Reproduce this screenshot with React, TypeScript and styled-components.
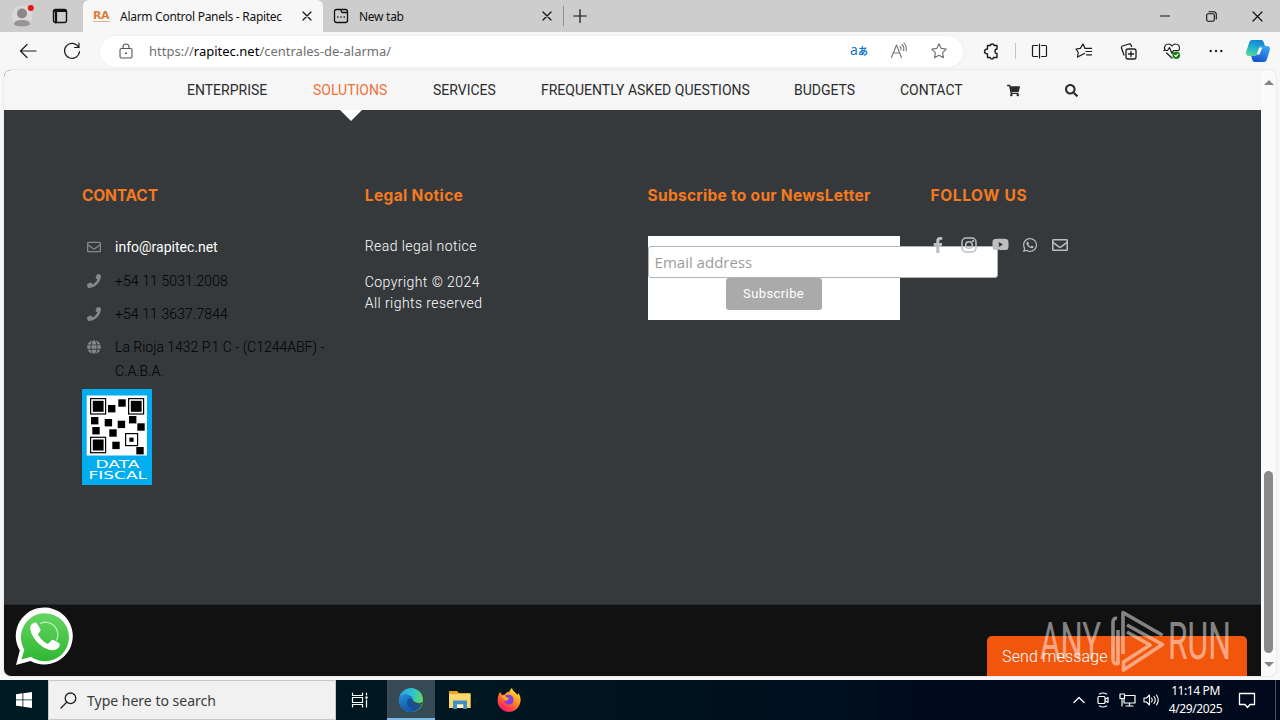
import { ReactNode } from 'react';
import styled, { createGlobalStyle, css } from 'styled-components';
import {
  FaFacebookF,
  FaGlobe,
  FaPhone,
  FaRegEnvelope,
  FaSearch,
  FaShoppingCart,
  FaWhatsapp,
  FaYoutube,
} from 'react-icons/fa';

const fonts = {
  system: '"Noto Sans", "Open Sans", sans-serif',
  body: 'Roboto, "Liberation Sans", sans-serif',
  heading: 'Inter, "Open Sans", sans-serif',
};

const colors = {
  strip: '#cdcdcd',
  chrome: '#f7f7f7',
  footer: '#36393b',
  bottom: '#111111',
  orange: '#f5791f',
  chat: '#f2560d',
  icon: '#1b1b1b',
};

const GlobalStyle = createGlobalStyle`
  * {
    box-sizing: border-box;
  }
  body {
    margin: 0;
    overflow: hidden;
  }
  svg {
    display: block;
    flex: none;
  }
`;

const Desktop = styled.div`
  position: relative;
  display: flex;
  flex-direction: column;
  width: 1280px;
  height: 720px;
  overflow: hidden;
  background: ${colors.chrome};
  font-family: ${fonts.system};
  white-space: nowrap;
`;

const Slot = styled.div<{ $w: number }>`
  display: flex;
  flex: none;
  align-items: center;
  justify-content: center;
  width: ${({ $w }) => $w}px;
  height: 100%;
`;

const Spacer = styled.div`
  flex: 1;
`;

/* ---------- browser ---------- */

const TabStrip = styled.div`
  display: flex;
  flex: none;
  height: 32px;
  background: ${colors.strip};
  color: #111;
`;

const Tab = styled.div<{ $active?: boolean }>`
  display: flex;
  align-items: center;
  gap: 10px;
  width: 240px;
  padding: 0 11px 0 10px;
  ${({ $active }) =>
    $active &&
    css`
      background: ${colors.chrome};
      border-radius: 6px 6px 0 0;
    `}
`;

const TabTitle = styled.div`
  flex: 1;
  font-size: 12px;
  letter-spacing: -0.28px;
  color: #111;
`;

const Favicon = styled.div`
  width: 17px;
  border-bottom: 1px solid #d9b596;
  font: bold 11px/10px 'DejaVu Sans', sans-serif;
  letter-spacing: -0.4px;
  color: #e07b35;
`;

const Divider = styled.div<{ $h: number; $color?: string }>`
  flex: none;
  width: 1px;
  height: ${({ $h }) => $h}px;
  align-self: center;
  background: ${({ $color = '#8f8f8f' }) => $color};
`;

const Toolbar = styled.div`
  display: flex;
  flex: none;
  align-items: center;
  height: 38px;
  padding-left: 6px;
  color: ${colors.icon};
`;

const AddressBar = styled.div`
  display: flex;
  align-items: center;
  width: 863px;
  height: 31px;
  margin-left: 6px;
  border-radius: 16px;
  background: #fff;
  box-shadow: 0 0 2px #e2e2e2;
`;

const Url = styled.div`
  margin-left: 4px;
  font-size: 13px;
  color: #707070;

  b {
    font-weight: 400;
    color: #000;
  }
`;

const Translate = styled.div`
  margin-top: -3px;
  font: 14px 'Noto Sans', 'Noto Sans CJK JP', sans-serif;
  color: #1377c9;

  small {
    font-family: 'Noto Sans CJK JP', sans-serif;
    font-size: 10px;
    font-weight: 700;
  }
`;

const Window = styled.div`
  display: flex;
  flex: none;
  width: 1272px;
  height: 606px;
  margin-left: 4px;
  border-radius: 7px;
  overflow: hidden;
  background: #fafafa;
  box-shadow: 0 0 2px #ccc;
`;

const Page = styled.div`
  position: relative;
  width: 1257px;
  background: ${colors.bottom};
  font-family: ${fonts.body};
`;

const ScrollTrack = styled.div`
  display: flex;
  flex: 1;
  flex-direction: column;
  align-items: center;
  padding: 10px 0 9px;
`;

const ScrollThumb = styled.div`
  width: 9px;
  height: 182px;
  margin-bottom: 9px;
  border-radius: 5px;
  background: #8a8a8a;
`;

const Arrow = styled.div<{ $down?: boolean }>`
  border: solid transparent;
  border-width: 0 5px;
  ${({ $down }) => ($down ? 'border-top: 5px solid #858585;' : 'border-bottom: 5px solid #858585;')}
`;

/* ---------- site ---------- */

const Nav = styled.nav`
  display: flex;
  align-items: center;
  gap: 45px;
  height: 40px;
  padding-left: 183px;
  background: #f6f6f6;
  color: #2c2c2c;
`;

const NavItem = styled.div<{ $active?: boolean; $w: number }>`
  position: relative;
  width: ${({ $w }) => $w}px;
  font-size: 14px;
  line-height: 40px;
  color: ${({ $active }) => ($active ? '#f1703a' : 'inherit')};

  ${({ $active }) =>
    $active &&
    css`
      &::after {
        content: '';
        position: absolute;
        top: 40px;
        left: 50%;
        margin-left: -11px;
        border: 11px solid transparent;
        border-top-color: #fff;
        border-bottom: 0;
      }
    `}
`;

const Footer = styled.footer`
  display: grid;
  grid-template-columns: repeat(4, 252px);
  column-gap: 30.8px;
  height: 495px;
  padding: 76px 0 0 78px;
  border-bottom: 1px solid #282a2b;
  background: ${colors.footer};
`;

const Column = styled.div`
  min-width: 0;
`;

const Heading = styled.h4<{ $spacing: number }>`
  margin: 0;
  font: 700 15.5px/20px ${fonts.heading};
  letter-spacing: ${({ $spacing }) => $spacing}px;
  color: ${colors.orange};
`;

const ContactList = styled.ul`
  margin: 25px 0 0;
  padding: 0;
  list-style: none;
`;

const ContactRow = styled.li<{ $light?: boolean }>`
  display: flex;
  margin-top: 5px;
  padding: 4.25px 0 0 5px;
  font-size: 14px;
  font-weight: ${({ $light }) => ($light ? 400 : 300)};
  line-height: 24px;
  color: ${({ $light }) => ($light ? '#fff' : '#000')};

  svg {
    width: 14px;
    height: 14px;
    margin: 5px 14px 0 0;
    color: #868787;
  }
`;

const Phone = styled.span`
  letter-spacing: 0.1px;
`;

const Fiscal = styled.div`
  margin-top: 6px;
`;

const Legal = styled.p<{ $top: number }>`
  margin: ${({ $top }) => $top}px 0 0;
  font-size: 14px;
  font-weight: 300;
  line-height: 21px;
  letter-spacing: 0.43px;
  color: #fff;
`;

const Newsletter = styled.div`
  display: flex;
  flex-direction: column;
  align-items: center;
  height: 84px;
  margin-top: 30px;
  padding-top: 10px;
  background: #fff;
`;

const EmailInput = styled.input`
  align-self: flex-start;
  flex: none;
  width: 350px;
  height: 32px;
  padding: 0 6px;
  border: 1px solid #b3b3b3;
  border-radius: 3px;
  background: #fff;
  font: 15px 'Open Sans', sans-serif;
  &::placeholder {
    color: #9c9c9c;
  }
`;

const SubscribeButton = styled.button`
  width: 96px;
  height: 32px;
  padding: 0 0 2px;
  border: 0;
  border-radius: 3px;
  background: #aaa;
  font: 13px ${fonts.body};
  letter-spacing: 0.4px;
  color: #fff;
`;

const Social = styled.div`
  display: flex;
  align-items: center;
  margin: 30px 0 0 -1px;
  color: #bebebe;
`;

const WhatsappBubble = styled.div`
  position: absolute;
  left: 11px;
  bottom: 11px;
`;

const ChatTab = styled.div`
  position: absolute;
  right: 14px;
  bottom: 0;
  width: 260px;
  height: 40px;
  padding-left: 15px;
  border-radius: 5px 5px 0 0;
  background: ${colors.chat};
  font-size: 16px;
  font-weight: 300;
  line-height: 41px;
  letter-spacing: 0.16px;
  color: #fff;
`;

const Watermark = styled.div`
  position: absolute;
  left: 1036px;
  top: 606px;
`;

/* ---------- taskbar ---------- */

const Taskbar = styled.div`
  display: flex;
  flex: none;
  height: 40px;
  margin-top: 4px;
  background: linear-gradient(90deg, #001a24 0%, #00151f 45%, #000b1c 75%, #000a1c 100%);
  color: #fff;
`;

const SearchBox = styled.div`
  display: flex;
  align-items: center;
  width: 288px;
  border: 1px solid #c9c9c9;
  background: #f1f1f1;
  font-size: 14px;
  color: #3a3a3a;
`;

const AppButton = styled.div<{ $active?: boolean }>`
  display: flex;
  align-items: center;
  justify-content: center;
  width: 48px;
  height: 40px;
  ${({ $active }) =>
    $active &&
    css`
      background: #354a52;
      border-bottom: 2px solid #7cb9e8;
      padding-top: 2px;
    `}
`;

const Clock = styled.div`
  width: 65px;
  padding-top: 2px;
  text-align: center;
  font-size: 12px;
  line-height: 18px;
  letter-spacing: -0.4px;
`;

const ShowDesktop = styled.div`
  width: 5px;
  border-left: 1px solid #4d535f;
`;

interface LineIconProps {
  w?: number;
  h?: number;
  stroke?: string;
  sw?: number;
  children: ReactNode;
}

const LineIcon = ({ w = 18, h = 18, stroke = 'currentColor', sw = 1.2, children }: LineIconProps) => (
  <svg
    width={w}
    height={h}
    viewBox={`0 0 ${w} ${h}`}
    fill="none"
    stroke={stroke}
    strokeWidth={sw}
    strokeLinecap="round"
    strokeLinejoin="round"
  >
    {children}
  </svg>
);

const CloseIcon = ({ size = 8 }: { size?: number }) => (
  <LineIcon w={size + 2} h={size + 2}>
    <path d={`M1 1l${size} ${size}M${size + 1} 1l-${size} ${size}`} />
  </LineIcon>
);

const starPath = 'M9 1.8l2.2 4.6 5 .7-3.6 3.5.9 5L9 13.2l-4.5 2.4.9-5L1.8 7.1l5-.7z';

const qrDots = [
  [26, 16], [36.3, 10.3], [9, 28], [22.7, 30], [35.7, 31.7], [47, 27],
  [55.3, 34.3], [10.3, 38], [27.3, 40.3], [30.3, 52.7], [54.3, 58],
];
const qrFinders = [[8, 9], [46, 9], [8, 47.7]];

const DataFiscal = () => (
  <svg width="70" height="96" viewBox="0 0 70 96">
    <rect width="70" height="96" fill="#00aeef" />
    <rect x="4.7" y="6.5" width="60.3" height="60" fill="#fff" />
    {qrFinders.map(([x, y]) => (
      <g key={`${x}-${y}`}>
        <rect x={x + 0.6} y={y + 0.6} width="15" height="15.4" fill="none" stroke="#000" strokeWidth="1.2" />
        <rect x={x + 2.8} y={y + 2.8} width="10.8" height="11" />
      </g>
    ))}
    {qrDots.map(([x, y]) => (
      <rect key={`${x}-${y}`} x={x} y={y} width="7.4" height="7.4" />
    ))}
    <rect x="43.6" y="44.6" width="12" height="12" fill="none" stroke="#000" strokeWidth="1.2" />
    <rect x="47.4" y="48.6" width="4.2" height="4.2" />
    <g fill="#fff" fontFamily="DejaVu Sans" fontSize="10">
      <text x="13.5" y="79" textLength="44" lengthAdjust="spacingAndGlyphs">DATA</text>
      <text x="6.5" y="89.8" textLength="58.5" lengthAdjust="spacingAndGlyphs">FISCAL</text>
    </g>
  </svg>
);

const WhatsappLogo = () => (
  <svg width="58" height="58" viewBox="0 0 58 58">
    <defs>
      <linearGradient id="wa" x1="0" y1="0" x2="0" y2="1">
        <stop offset="0" stopColor="#66d463" />
        <stop offset="1" stopColor="#2fb832" />
      </linearGradient>
    </defs>
    <path d="M1 58L4.8 43.6A28.5 28.5 0 1 1 15.6 54z" fill="#fff" />
    <path d="M6.5 52.5l2.8-10A24 24 0 1 1 16 49.8z" fill="url(#wa)" />
    <path d="M25 16.5a12.5 12.5 0 0 1 16.5 17" fill="none" stroke="#b5edb0" strokeWidth="1.3" />
    <path
      d="M22.5 17.2c-1.2-2.2-2.4-1.8-4-1.3-3 1-3.6 4.5-2.9 7.5 2 8.5 10 16.6 18.5 19.4 4 1.3 9-.2 10.3-3.3.7-1.7.4-3.1-.7-3.8l-5.2-2.8c-1.1-.5-1.7-.2-2.5.8l-1.9 2.4c-.6.7-1.2.8-2.2.3-4-1.9-6.6-4.6-8.6-8.3-.4-.8-.3-1.2.3-1.9l1.5-1.9c.5-.8.5-1.4.2-2.2z"
      fill="#fff"
    />
  </svg>
);

const AnyRunMark = () => (
  <svg width="204" height="72" viewBox="0 0 204 72" opacity="0.48">
    <g fill="#fff" fontFamily="Roboto" fontSize="51">
      <text x="4" y="53" textLength="61" lengthAdjust="spacingAndGlyphs">ANY</text>
      <text x="132" y="53" textLength="63" lengthAdjust="spacingAndGlyphs">RUN</text>
    </g>
    <g fill="none" stroke="#fff" strokeWidth="3.6" strokeLinejoin="round">
      <path d="M81 12.500q-4-1-4 4v37q0 5 5 4V24" />
      <path d="M87 48V6.500l39.500 22.800M91 19l35.500 19.500L87.500 64V56L114 39 91 26" />
    </g>
  </svg>
);

const EdgeLogo = () => (
  <svg width="24" height="24" viewBox="0 0 24 24">
    <defs>
      <linearGradient id="edgeTop" x1="0" y1="0.3" x2="1" y2="0.5">
        <stop offset="0" stopColor="#2c9fe0" />
        <stop offset="0.55" stopColor="#2fc3cf" />
        <stop offset="1" stopColor="#66d957" />
      </linearGradient>
      <linearGradient id="edgeBody" x1="0" y1="0" x2="0.6" y2="1">
        <stop offset="0" stopColor="#2390dc" />
        <stop offset="1" stopColor="#114f9f" />
      </linearGradient>
    </defs>
    <circle cx="12" cy="12" r="12" fill="url(#edgeTop)" />
    <path d="M0 12C.5 7 5 5.500 8.500 6.500 12 7.500 14.500 9.500 14 12.500c-.3 2-1 2 .3 3.400 2 1.700 5.700 1.800 8.300.6C20.700 21 16.800 24 12 24 5 24 0 19 0 12z" fill="url(#edgeBody)" />
    <path d="M8.500 12c-1.500 5 1.700 9.500 7.500 9.700 2.600-.4 5-2.400 6.600-5.200-2.600 1.200-6.300 1.100-8.300-.6-1.300-1.400-.6-1.400-.3-3.400-1-2.500-4-3.500-5.500-.5z" fill="#174f94" />
    <path d="M14.300 15.900c-1.300-1.400-.6-1.400-.3-3.400 4 3 7 3.500 9.900 1.200l-.6 2.300c-2.600 1.600-6.900 1.600-9-.1z" fill="#354a52" />
  </svg>
);

const FolderIcon = () => (
  <svg width="22" height="20" viewBox="0 0 22 20">
    <path d="M0 1h8l2 2h11.500v15H0z" fill="#e9a521" />
    <path d="M0 4h21.500v14H0z" fill="#fbd86c" />
    <path d="M4 19v-8.500h14V19h-3.800v-4.500H8V19z" fill="#3f8fc9" />
    <path d="M8 14.500h6.200V18H8z" fill="#fff2c2" />
  </svg>
);

const FirefoxIcon = () => (
  <svg width="24" height="24" viewBox="0 0 24 24">
    <defs>
      <linearGradient id="fox" x1="0.8" y1="0" x2="0.2" y2="1">
        <stop offset="0" stopColor="#fff03a" />
        <stop offset="0.45" stopColor="#ff8a22" />
        <stop offset="0.8" stopColor="#fb3350" />
        <stop offset="1" stopColor="#e31587" />
      </linearGradient>
    </defs>
    <path d="M3 4l2.200 3L8 6.500C9 4.500 10.500 4 12 4c1-1.500 1.500-3 3-4 .5 3 3.500 4 5.500 7l.8-2C23.500 8 24 11 23.300 14.500 22 20 17.500 24 12 24S1 19.500.6 13.500C.4 10 1.500 6 3 4z" fill="url(#fox)" />
    <path d="M8 7.500c4-1.500 8-.5 8.600 4 .3 3.500-2.300 5.700-5.200 5.100-2.400-.4-4-1.900-4.400-4.100 1.500 1 3 .8 4.500-.5C10 11.500 8 10.500 8 7.500z" fill="#8142d9" />
    <path d="M4.500 8.500L8 7.300c.5 2 1.800 2.500 4 2.700-.5 1.700-2 1.700-3.500 2.500z" fill="#ffad2a" />
  </svg>
);

const CopilotIcon = () => (
  <svg width="24" height="22" viewBox="0 0 24 22">
    <defs>
      <linearGradient id="copLeft" x1="0.5" y1="0" x2="0.2" y2="1">
        <stop offset="0" stopColor="#1682d4" />
        <stop offset="0.5" stopColor="#22b4cf" />
        <stop offset="1" stopColor="#59d894" />
      </linearGradient>
      <linearGradient id="copRight" x1="0.8" y1="0" x2="0.3" y2="1">
        <stop offset="0" stopColor="#3aa6f5" />
        <stop offset="1" stopColor="#1650cf" />
      </linearGradient>
    </defs>
    <path d="M6 0h9c2 0 2.500 1.500 3 3l1 3h-3c-2 0-3 1-3.500 3l-1.500 5c-.7 1.500-1.500 2-3 2H3c-2.500 0-3.500-2-2.700-4.500L3 3C3.500 1 4.500 0 6 0z" fill="url(#copLeft)" />
    <path d="M18 22H9c-2 0-2.500-1.500-3-3l-.7-3H8c2 0 3-1 3.500-3L13 8c.6-1.500 1.500-2 3-2h5c2.500 0 3.500 2 2.700 4.500L21 19c-.6 2-1.500 3-3 3z" fill="url(#copRight)" />
    <path d="M13.500 7.500h2.800L13.500 14.500h-2.800z" fill="#fff" />
  </svg>
);

const Browser = () => (
  <>
    <TabStrip>
      <Slot $w={44}>
        <svg width="24" height="24" viewBox="0 0 24 24">
          <circle cx="12" cy="12" r="10.500" fill="#d8d8d8" />
          <circle cx="12" cy="9.500" r="5" fill="#8d8888" />
          <path d="M4 20.500c0-3.500 3-4.500 8-4.500s8 1 8 4.500c-2 2.500-14 2.500-16 0z" fill="#9b9696" />
          <circle cx="20.800" cy="4" r="3" fill="#e5141d" />
        </svg>
      </Slot>
      <Slot $w={32}>
        <LineIcon w={16} h={16} sw={1.4}>
          <rect x="1.500" y="1.500" width="13" height="13" rx="2" />
          <path d="M2 3h12M4 3.500v11" strokeWidth="2.200" />
        </LineIcon>
      </Slot>
      <Slot $w={7} />
      <Tab $active>
        <Favicon>RA</Favicon>
        <TabTitle>Alarm Control Panels - Rapitec</TabTitle>
        <CloseIcon />
      </Tab>
      <Tab>
        <LineIcon w={16} h={16} sw={1.3}>
          <path d="M3.500 1.500h4l1.500 3h5.500v8q0 2-2 2h-9q-2 0-2-2v-9q0-2 2-2zM8 1.500h4.500q2 0 2 2v1" />
          <path d="M4.700 9h.2M7.900 9h.2M11.100 9h.2" strokeWidth="1.500" />
        </LineIcon>
        <TabTitle>New tab</TabTitle>
        <CloseIcon />
      </Tab>
      <Divider $h={20} />
      <Slot $w={31}>
        <LineIcon w={14} h={14}>
          <path d="M7 .6v12.800M.6 7h12.800" />
        </LineIcon>
      </Slot>
      <Spacer />
      <Slot $w={46}>
        <LineIcon w={10} h={10}>
          <path d="M.5 5h9" />
        </LineIcon>
      </Slot>
      <Slot $w={46}>
        <LineIcon w={11} h={11} sw={1.1}>
          <rect x=".7" y="2.700" width="7.600" height="7.600" rx="1.500" />
          <path d="M3 .7h4.500q2.800 0 2.800 2.800V8" />
        </LineIcon>
      </Slot>
      <Slot $w={46}>
        <CloseIcon size={9} />
      </Slot>
    </TabStrip>

    <Toolbar>
      <Slot $w={44}>
        <LineIcon>
          <path d="M17 9H2M8 2.500L1.500 9 8 15.500" />
        </LineIcon>
      </Slot>
      <Slot $w={44}>
        <LineIcon>
          <path d="M15.500 5A7.500 7.500 0 1 0 16.500 9.500M16 1v4.500h-4.500" />
        </LineIcon>
      </Slot>
      <AddressBar>
        <Slot $w={45}>
          <Slot $w={6} />
          <LineIcon w={14} h={16} stroke="#555" sw={1.1}>
            <rect x="1" y="5.500" width="12" height="9.500" rx="1.500" />
            <path d="M4 5.500V4a3 3 0 0 1 6 0v1.500" />
            <circle cx="7" cy="10.200" r=".5" />
          </LineIcon>
        </Slot>
        <Url>
          https://<b>rapitec.net</b>/centrales-de-alarma/
        </Url>
        <Spacer />
        <Slot $w={40}>
          <Translate>
            a<small>あ</small>
          </Translate>
        </Slot>
        <Slot $w={40}>
          <LineIcon stroke="#777" sw={1.1}>
            <path d="M1.500 15.500L6.500 3l5 12.500M3.300 11h6.500M10 4.500q1.500 1.500 1 3.500M12 2.500q2.500 2.500 1.500 6M14 1q3 3.500 2 8" />
          </LineIcon>
        </Slot>
        <Slot $w={40}>
          <LineIcon stroke="#777">
            <path d={starPath} />
          </LineIcon>
        </Slot>
        <Slot $w={4} />
      </AddressBar>
      <Slot $w={4} />
      <Slot $w={48}>
        <LineIcon w={17} h={17} sw={1.4}>
          <path d="M4.500 2.500h3q0-1.500 1.800-1.500T11 2.500h3V6q-2 0-2 2.300t2 2.200v4h-3.500q0 1.500-1.500 1.500t-1.700-1.500H4.500V11q-3-.3-3-2.500t3-2.500z" />
        </LineIcon>
      </Slot>
      <Divider $h={16} $color="#c4c4c4" />
      <Slot $w={46}>
        <LineIcon w={17} h={16}>
          <path d="M6.500 2.500h-4q-1 0-1 1v9q0 1 1 1h4M10.500 2.500h4q1 0 1 1v9q0 1-1 1h-4M8.500 1v14" />
        </LineIcon>
      </Slot>
      <Slot $w={44}>
        <LineIcon>
          <path d="M9.500 11.500L6.500 13l-4 2 .8-4.500L1 7l4.300-.6L8 2l2 4.400h6.500M11 9.500h5.500M11.500 12.800h5" />
        </LineIcon>
      </Slot>
      <Slot $w={44}>
        <LineIcon w={17} h={17} sw={1.3}>
          <rect x="6" y="6" width="10" height="10" rx="2" />
          <path d="M11 8.500v5M8.500 11h5M4 12L1.500 5q-.3-1.500 1-2l6.500-2q1.500-.3 2 1l.7 1.500" />
        </LineIcon>
      </Slot>
      <Slot $w={44}>
        <LineIcon>
          <path d="M2 8C.5 4 3 2 5.500 2 7.500 2 9 4 9 4s1.500-2 3.500-2C15 2 17.500 4 16.200 8M.8 8.500h3.700l2-3 2.500 6 1.500-3h5M3.500 11L9 16" />
          <circle cx="13.300" cy="13.200" r="3.800" fill="#148014" stroke="none" />
          <path d="M11.700 13.400l1.100 1.100 2.200-2.400" stroke="#fff" />
        </LineIcon>
      </Slot>
      <Slot $w={44}>
        <svg width="14" height="4" viewBox="0 0 14 4" fill="#222">
          <circle cx="1.700" cy="2" r="1.200" />
          <circle cx="7" cy="2" r="1.200" />
          <circle cx="12.300" cy="2" r="1.200" />
        </svg>
      </Slot>
      <Slot $w={40}>
        <CopilotIcon />
      </Slot>
    </Toolbar>
  </>
);

const navItems = [
  { label: 'ENTERPRISE', width: 81 },
  { label: 'SOLUTIONS', width: 75, active: true },
  { label: 'SERVICES', width: 63 },
  { label: 'FREQUENTLY ASKED QUESTIONS', width: 208 },
  { label: 'BUDGETS', width: 61 },
  { label: 'CONTACT', width: 62 },
];

const Site = () => (
  <Page>
    <Nav>
      {navItems.map(({ label, width, active }) => (
        <NavItem key={label} $w={width} $active={active}>
          {label}
        </NavItem>
      ))}
      <FaShoppingCart size={13} />
      <FaSearch size={13} />
    </Nav>
    <Footer>
      <Column>
        <Heading $spacing={-0.15}>CONTACT</Heading>
        <ContactList>
          <ContactRow $light>
            <FaRegEnvelope />
            info@rapitec.net
          </ContactRow>
          <ContactRow>
            <FaPhone />
            <Phone>+54 11 5031.2008</Phone>
          </ContactRow>
          <ContactRow>
            <FaPhone />
            <Phone>+54 11 3637.7844</Phone>
          </ContactRow>
          <ContactRow>
            <FaGlobe />
            <div>
              La Rioja 1432 P.1 C - (C1244ABF) -
              <br />
              C.A.B.A.
            </div>
          </ContactRow>
        </ContactList>
        <Fiscal>
          <DataFiscal />
        </Fiscal>
      </Column>
      <Column>
        <Heading $spacing={0.35}>Legal Notice</Heading>
        <Legal $top={30}>Read legal notice</Legal>
        <Legal $top={15}>
          Copyright © 2024
          <br />
          All rights reserved
        </Legal>
      </Column>
      <Column>
        <Heading $spacing={0.28}>Subscribe to our NewsLetter</Heading>
        <Newsletter>
          <EmailInput placeholder="Email address" />
          <SubscribeButton>Subscribe</SubscribeButton>
        </Newsletter>
      </Column>
      <Column>
        <Heading $spacing={0.65}>FOLLOW US</Heading>
        <Social>
          <Slot $w={17}>
            <FaFacebookF size={16} />
          </Slot>
          <Slot $w={46}>
            <LineIcon w={16} h={16} sw={1.5}>
              <rect x="1" y="1" width="14" height="14" rx="4" />
              <circle cx="8" cy="8" r="3.300" />
              <circle cx="12" cy="4" r=".4" />
            </LineIcon>
          </Slot>
          <Slot $w={16}>
            <FaYoutube size={17} />
          </Slot>
          <Slot $w={44}>
            <FaWhatsapp size={16} />
          </Slot>
          <Slot $w={16}>
            <FaRegEnvelope size={16} />
          </Slot>
        </Social>
      </Column>
    </Footer>
    <WhatsappBubble>
      <WhatsappLogo />
    </WhatsappBubble>
    <ChatTab>Send message</ChatTab>
  </Page>
);

const SystemTaskbar = () => (
  <Taskbar>
    <Slot $w={48}>
      <svg width="16" height="16" viewBox="0 0 16 16" fill="#fff">
        <path d="M0 2.200l6.500-.9v6.200H0zM7.300 1.200L16 0v7.500H7.300zM0 8.300h6.500v6.300L0 13.700zM7.300 8.300H16V16l-8.700-1.200z" />
      </svg>
    </Slot>
    <SearchBox>
      <Slot $w={38}>
        <LineIcon w={17} h={17} stroke="#222" sw={1.3}>
          <circle cx="10.500" cy="6.300" r="5.300" />
          <path d="M6.700 10.200L1 16" />
        </LineIcon>
      </Slot>
      Type here to search
    </SearchBox>
    <Slot $w={48}>
      <LineIcon w={18} h={16}>
        <path d="M1.500 1v2.500h10V1M1.500 15v-2.500h10V15M1.500 5.500h10v5h-10zM15.500 1v2M15.500 8v7" />
        <path d="M15.500 5.500v.3" strokeWidth="2.400" />
      </LineIcon>
    </Slot>
    <Slot $w={3} />
    <AppButton $active>
      <EdgeLogo />
    </AppButton>
    <Slot $w={1} />
    <AppButton>
      <FolderIcon />
    </AppButton>
    <Slot $w={1} />
    <AppButton>
      <FirefoxIcon />
    </AppButton>
    <Spacer />
    <Slot $w={24}>
      <LineIcon w={12} h={8} sw={1.3}>
        <path d="M1 6.500l5-5 5 5" />
      </LineIcon>
    </Slot>
    <Slot $w={24}>
      <LineIcon w={12} h={16}>
        <rect x="1" y="4.500" width="7" height="7" rx="1" />
        <path d="M8.500 7l2.500-1.500v5L8.500 9M2.500 2q3.500-2 7 0M2.500 14q3.500 2 7 0" />
      </LineIcon>
    </Slot>
    <Slot $w={24}>
      <LineIcon w={17} h={14}>
        <path d="M6 2.500h10v7.500H5V6.500M10.500 10v3M7 13h7M3 6v7" />
        <rect x="1" y="1" width="4.500" height="4.500" />
      </LineIcon>
    </Slot>
    <Slot $w={24}>
      <LineIcon w={17} h={14} sw={1.1}>
        <path d="M1 5v4h2.500l3 3V2l-3 3zM8.500 5q1.500 2 0 4M11 3.500q2.500 3.500 0 7M13.500 2q3.500 5 0 10" />
      </LineIcon>
    </Slot>
    <Clock>
      11:14 PM
      <br />
      4/29/2025
    </Clock>
    <Slot $w={38}>
      <LineIcon w={18} h={17} sw={1.3}>
        <path d="M1.500 1.500h15v11H12L9.500 15.500 7 12.500H1.500z" />
      </LineIcon>
    </Slot>
    <Slot $w={9} />
    <ShowDesktop />
  </Taskbar>
);

const App = () => (
  <Desktop>
    <GlobalStyle />
    <Browser />
    <Window>
      <Site />
      <ScrollTrack>
        <Arrow />
        <Spacer />
        <ScrollThumb />
        <Arrow $down />
      </ScrollTrack>
    </Window>
    <SystemTaskbar />
    <Watermark>
      <AnyRunMark />
    </Watermark>
  </Desktop>
);

export default App;
